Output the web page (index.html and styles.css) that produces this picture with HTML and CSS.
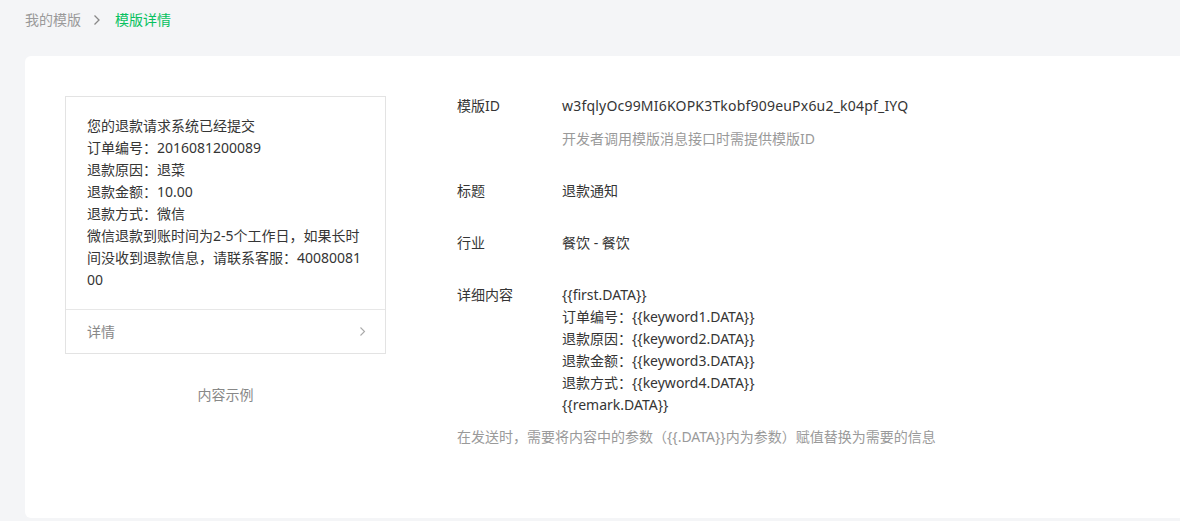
FILE: index.html
```html
<!DOCTYPE html>
<html lang="zh">
<head>
<meta charset="utf-8">
<link rel="stylesheet" href="styles.css">
</head>
<body>
<div class="page">
  <nav class="crumbs">
    <span class="crumb">我的模版</span>
    <svg class="crumb-sep" width="8" height="12" viewBox="0 0 8 12"><path d="M1.5 1.5 L6 6 L1.5 10.5" fill="none" stroke="#888" stroke-width="1.3"/></svg>
    <span class="crumb current">模版详情</span>
  </nav>
  <main class="panel">
    <section class="preview-col">
      <div class="preview">
        <div class="preview-body">
          <p>您的退款请求系统已经提交</p>
          <p>订单编号：2016081200089</p>
          <p>退款原因：退菜</p>
          <p>退款金额：10.00</p>
          <p>退款方式：微信</p>
          <p>微信退款到账时间为2-5个工作日，如果长时间没收到退款信息，请联系客服：4008008100</p>
        </div>
        <div class="preview-foot">
          <span>详情</span>
          <svg width="7" height="11" viewBox="0 0 7 11"><path d="M1.5 1.5 L5.5 5.5 L1.5 9.5" fill="none" stroke="#aaa" stroke-width="1.1"/></svg>
        </div>
      </div>
      <div class="preview-caption">内容示例</div>
    </section>
    <section class="info">
      <div class="row">
        <div class="label">模版ID</div>
        <div class="value">
          <div class="mono-id">w3fqlyOc99MI6KOPK3Tkobf909euPx6u2_k04pf_IYQ</div>
          <div class="hint">开发者调用模版消息接口时需提供模版ID</div>
        </div>
      </div>
      <div class="row">
        <div class="label">标题</div>
        <div class="value">退款通知</div>
      </div>
      <div class="row">
        <div class="label">行业</div>
        <div class="value">餐饮 - 餐饮</div>
      </div>
      <div class="row">
        <div class="label">详细内容</div>
        <div class="value">
          <div>{{first.DATA}}</div>
          <div>订单编号：{{keyword1.DATA}}</div>
          <div>退款原因：{{keyword2.DATA}}</div>
          <div>退款金额：{{keyword3.DATA}}</div>
          <div>退款方式：{{keyword4.DATA}}</div>
          <div>{{remark.DATA}}</div>
        </div>
      </div>
      <div class="note">在发送时，需要将内容中的参数（{{.DATA}}内为参数）赋值替换为需要的信息</div>
    </section>
  </main>
</div>
</body>
</html>
```

FILE: styles.css
```css
* { box-sizing: border-box; }
html, body {
  margin: 0;
  padding: 0;
  background: #f4f5f7;
  overflow: hidden;
}
body {
  font-family: "Noto Sans", "Noto Sans CJK SC", sans-serif;
  font-size: 14px;
  line-height: 22px;
  color: #353535;
}
p { margin: 0; }

.page {
  padding: 9px 0 0 25px;
  width: 1220px;
}

.crumbs {
  display: flex;
  align-items: center;
  height: 22px;
}
.crumb { color: #9a9a9a; }
.crumb-sep { margin: 0 14px 0 12px; }
.crumb.current { color: #07c160; }

.panel {
  margin-top: 25px;
  background: #fff;
  border-radius: 6px;
  height: 462px;
  padding: 39px 40px 40px;
  display: flex;
}

.preview-col { width: 321px; flex: none; padding-top: 1px; }
.preview {
  border: 1px solid #e3e3e3;
  background: #fff;
}
.preview-body {
  padding: 18px 21px 18px 21px;
  word-break: break-all;
  color: #353535;
}
.preview-foot {
  border-top: 1px solid #e7e7e7;
  height: 44px;
  padding: 0 19px 0 21px;
  display: flex;
  align-items: center;
  justify-content: space-between;
  color: #888;
}
.preview-caption {
  text-align: center;
  color: #888;
  margin-top: 30px;
}

.info {
  margin-left: 71px;
}
.row {
  display: flex;
  margin-bottom: 30px;
}
.label { width: 105px; flex: none; }
.mono-id { letter-spacing: 0.2px; }
.hint { color: #9a9a9a; margin-top: 11px; }
.row:nth-child(4) { margin-bottom: 10px; }
.note { color: #9a9a9a; }
```
